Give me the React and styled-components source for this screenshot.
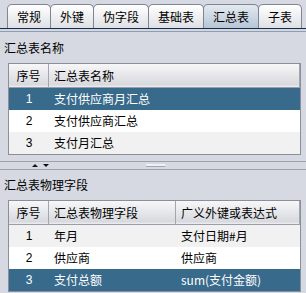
import React from "react";
import styled, { createGlobalStyle } from "styled-components";

const Global = createGlobalStyle`
  html, body { margin: 0; padding: 0; }
  body {
    background: #d6d9e1;
    font-family: "Noto Sans CJK SC", "Noto Sans", sans-serif;
    font-size: 12px;
    color: #000;
    width: 306px;
    height: 293px;
    overflow: hidden;
  }
`;

const Page = styled.div`
  display: flex;
  flex-direction: column;
  width: 306px;
  height: 293px;
  overflow: hidden;
`;

const TabBar = styled.div`
  display: flex;
  align-items: flex-end;
  height: 28px;
  padding-left: 7px;
  border-bottom: 1px solid #1d2a45;
  box-shadow: 0 2px 0 #d0d8e2, 0 3px 0 #8f9cb2;
  margin-bottom: 3px;
  overflow: hidden;
`;

const Tab = styled.div`
  flex: 0 0 auto;
  white-space: nowrap;
  height: 24px;
  box-sizing: border-box;
  padding: 0 9px;
  margin-right: -1px;
  display: flex;
  align-items: center;
  justify-content: center;
  border: 1px solid #7d8594;
  border-bottom: none;
  border-radius: 5px 5px 0 0;
  line-height: 1;
  background: ${(p) =>
    p.$active
      ? "linear-gradient(#e3e9ef, #b6c6d6)"
      : "linear-gradient(#ffffff, #dfe0e4)"};
`;

const SectionLabel = styled.div`
  height: ${(p) => p.$h}px;
  padding-left: 4px;
  display: flex;
  align-items: center;
  line-height: 1;
`;

const Table = styled.div`
  margin: 0 5px 0 8px;
  border: 1px solid #8b8f99;
  background: #fff;
  display: grid;
  grid-template-columns: ${(p) => p.$cols};
`;

const HeadCell = styled.div`
  height: 24px;
  box-sizing: border-box;
  display: flex;
  align-items: center;
  justify-content: ${(p) => (p.$center ? "center" : "flex-start")};
  padding-left: ${(p) => (p.$center ? "0" : "5px")};
  background: linear-gradient(#f7f7f9, #d8d9de 90%, #eeeef2);
  border-right: 1px solid #a2a6ae;
  border-bottom: 1px solid #9a9ea8;
  line-height: 1;
  &:last-of-type { border-right: none; }
`;

const Cell = styled.div`
  height: 22px;
  box-sizing: border-box;
  display: flex;
  align-items: center;
  justify-content: ${(p) => (p.$center ? "center" : "flex-start")};
  padding-left: ${(p) => (p.$center ? "0" : "5px")};
  line-height: 1;
  white-space: nowrap;
  overflow: hidden;
  font-family: ${(p) => (p.$num ? '"Liberation Sans", "Noto Sans CJK SC", sans-serif' : "inherit")};
  background: ${(p) => (p.$sel ? "#386a8b" : p.$odd ? "#f1f1f1" : "#ffffff")};
  color: ${(p) => (p.$sel ? "#ffffff" : "#000")};
`;

const Splitter = styled.div`
  position: relative;
  margin-top: 6px;
  height: 7px;
  border-top: 1px solid #9ca1ab;
  border-bottom: 1px solid #9ca1ab;
`;

const Arrows = styled.div`
  position: absolute;
  left: 32px;
  top: 2px;
  display: flex;
  gap: 5px;
`;

const Arrow = styled.div`
  width: 0;
  height: 0;
  border-left: 3px solid transparent;
  border-right: 3px solid transparent;
  ${(p) => (p.$up ? "border-bottom: 3px solid #111;" : "border-top: 3px solid #111;")}
`;

const Grip = styled.div`
  position: absolute;
  left: 146px;
  top: 2px;
  width: 19px;
  height: 2px;
  background: #eef0f4;
  border-bottom: 1px solid #a0a5ae;
`;

const rows1 = ["支付供应商月汇总", "支付供应商汇总", "支付月汇总"];
const rows2 = [
  ["年月", "支付日期#月"],
  ["供应商", "供应商"],
  ["支付总额", "sum(支付金额)"],
];

export default function App() {
  const tabs = ["常规", "外键", "伪字段", "基础表", "汇总表", "子表"];
  return (
    <Page>
      <Global />
      <TabBar>
        {tabs.map((t) => (
          <Tab key={t} $active={t === "汇总表"}>{t}</Tab>
        ))}
      </TabBar>
      <SectionLabel $h={31}>汇总表名称</SectionLabel>
      <Table $cols="40px 1fr">
        <HeadCell $center>序号</HeadCell>
        <HeadCell>汇总表名称</HeadCell>
        {rows1.map((r, i) => (
          <React.Fragment key={r}>
            <Cell $center $num $sel={i === 0} $odd={i % 2 === 0}>{i + 1}</Cell>
            <Cell $sel={i === 0} $odd={i % 2 === 0}>{r}</Cell>
          </React.Fragment>
        ))}
      </Table>
      <Splitter>
        <Arrows>
          <Arrow $up />
          <Arrow />
        </Arrows>
        <Grip />
      </Splitter>
      <SectionLabel $h={30}>汇总表物理字段</SectionLabel>
      <Table $cols="40px 127px 1fr">
        <HeadCell $center>序号</HeadCell>
        <HeadCell>汇总表物理字段</HeadCell>
        <HeadCell>广义外键或表达式</HeadCell>
        {rows2.map((r, i) => (
          <React.Fragment key={r[0]}>
            <Cell $center $num $sel={i === 2} $odd={i % 2 === 0}>{i + 1}</Cell>
            <Cell $sel={i === 2} $odd={i % 2 === 0}>{r[0]}</Cell>
            <Cell $sel={i === 2} $odd={i % 2 === 0}>{r[1]}</Cell>
          </React.Fragment>
        ))}
      </Table>
    </Page>
  );
}
